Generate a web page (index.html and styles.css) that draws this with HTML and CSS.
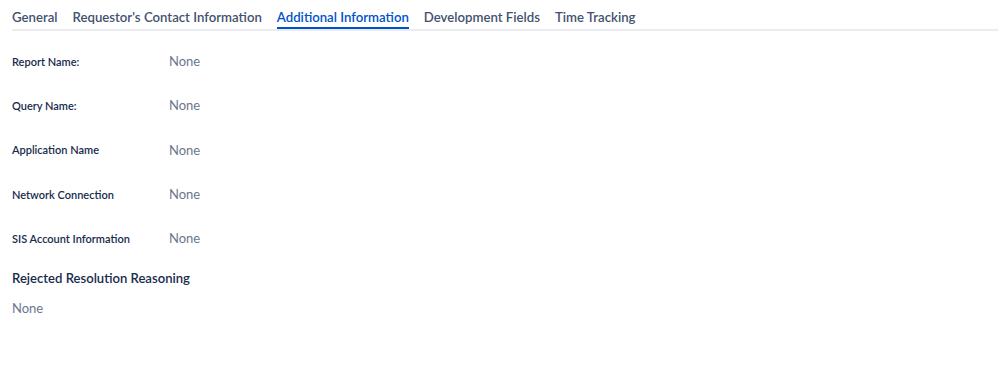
FILE: index.html
```html
<!DOCTYPE html>
<html lang="en">
<head>
<meta charset="utf-8">
<title>Additional Information</title>
<link rel="stylesheet" href="styles.css">
</head>
<body>
<div class="page">
  <nav class="tabs">
    <span class="tab">General</span>
    <span class="tab">Requestor's Contact Information</span>
    <span class="tab active">Additional Information</span>
    <span class="tab">Development Fields</span>
    <span class="tab">Time Tracking</span>
  </nav>
  <div class="fields">
    <div class="row"><div class="label">Report Name:</div><div class="value">None</div></div>
    <div class="row"><div class="label">Query Name:</div><div class="value">None</div></div>
    <div class="row"><div class="label">Application Name</div><div class="value">None</div></div>
    <div class="row"><div class="label">Network Connection</div><div class="value">None</div></div>
    <div class="row"><div class="label">SIS Account Information</div><div class="value">None</div></div>
  </div>
  <section class="block">
    <h3 class="block-title">Rejected Resolution Reasoning</h3>
    <div class="block-value">None</div>
  </section>
</div>
</body>
</html>
```
FILE: styles.css
```css
html, body {
  margin: 0;
  padding: 0;
  background: #ffffff;
}
body {
  font-family: Lato, "Open Sans", sans-serif;
  color: #172b4d;
}
.page {
  padding: 0 1px 0 12px;
}
.tabs {
  display: flex;
  gap: 15px;
  border-bottom: 2px solid #ebecf0;
  height: 31px;
  box-sizing: border-box;
  padding-top: 7px;
}
.tab {
  font-size: 13.2px;
  font-weight: 600;
  color: #42526e;
  line-height: 20px;
  height: 22px;
  box-sizing: border-box;
  white-space: nowrap;
}
.tab.active {
  color: #0052cc;
  border-bottom: 2px solid #0052cc;
}
.fields {
  padding-top: 8px;
}
.row {
  display: flex;
  align-items: center;
  height: 44.3px;
}
.label {
  width: 157px;
  flex: none;
  font-size: 11px;
  font-weight: 600;
  color: #172b4d;
}
.value {
  font-size: 13px;
  color: #6b778c;
}
.block {
  padding-top: 8px;
}
.block-title {
  margin: 0;
  font-size: 13.1px;
  font-weight: 600;
  color: #172b4d;
  line-height: 20px;
}
.block-value {
  margin-top: 10px;
  font-size: 13px;
  color: #6b778c;
  line-height: 20px;
}
```
